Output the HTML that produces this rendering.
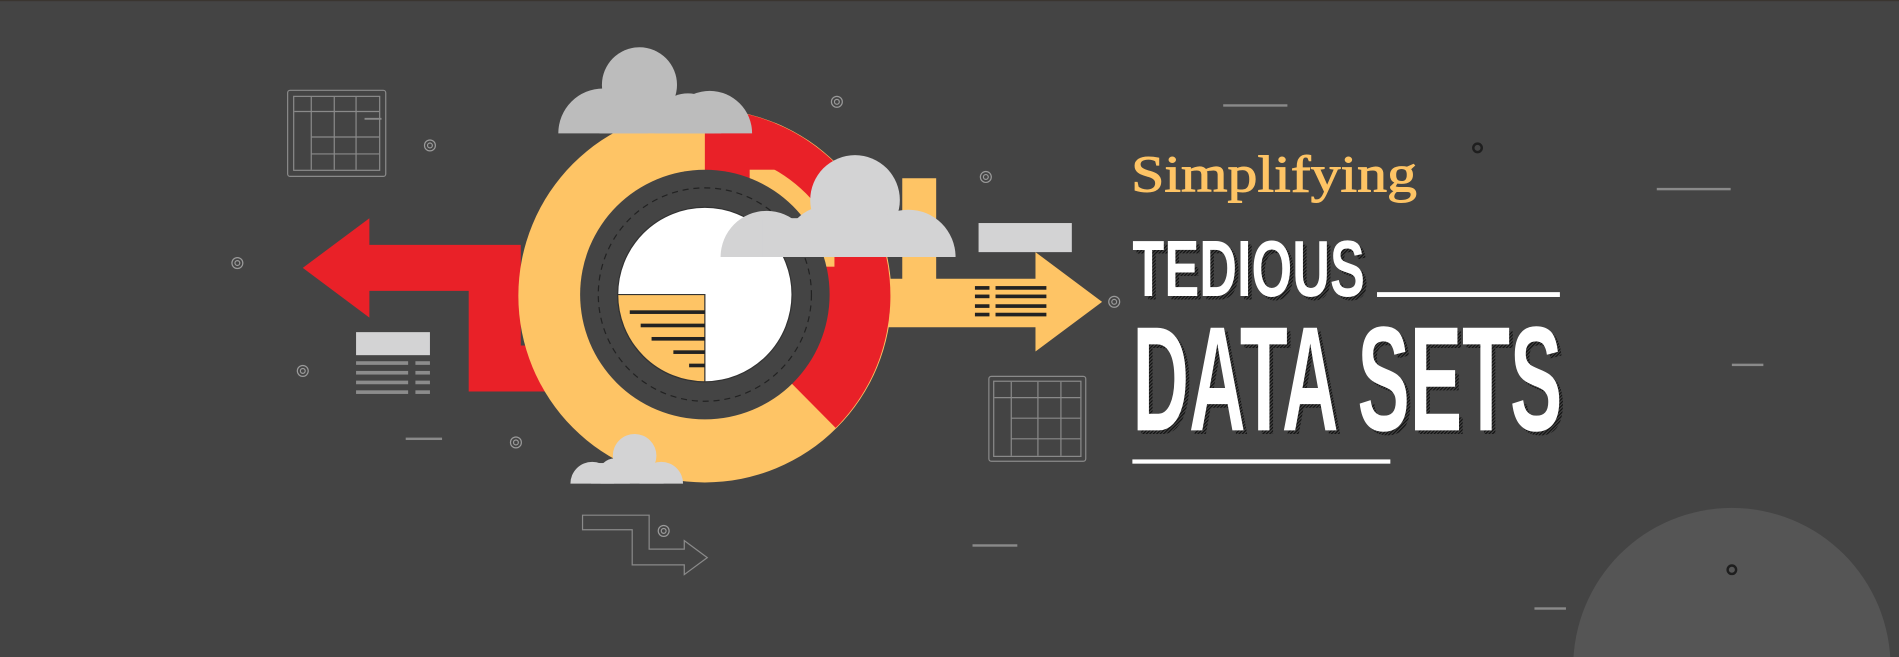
<!DOCTYPE html>
<html><head><meta charset="utf-8"><style>
html,body{margin:0;padding:0;background:#444;width:1899px;height:657px;overflow:hidden}
svg{display:block;position:absolute;left:0;top:0}
</style></head><body>
<svg width="1899" height="657" viewBox="0 0 1568 542" preserveAspectRatio="none" xmlns="http://www.w3.org/2000/svg">
<defs>
<clipPath id="c1"><rect x="0" y="0" width="1568" height="110"/></clipPath>
<clipPath id="c2"><rect x="0" y="0" width="1568" height="212"/></clipPath>
<clipPath id="c3"><rect x="0" y="0" width="1568" height="399"/></clipPath>
<clipPath id="cw"><circle cx="582" cy="243" r="118"/></clipPath>
<pattern id="hatch" width="2" height="2" patternUnits="userSpaceOnUse" patternTransform="rotate(45)"><rect width="1" height="2" fill="#111"/></pattern>
</defs>
<rect width="1568" height="542" fill="#444"/>
<rect width="1568" height="1" fill="#3a3530"/>
<circle cx="1430" cy="550" r="131" fill="#555"/>
<g fill="#8a8a8a">
<rect x="1010" y="86" width="53" height="2"/><rect x="1368" y="155" width="61" height="2"/>
<rect x="1430" y="300" width="26" height="2"/><rect x="335" y="361" width="30" height="2"/>
<rect x="803" y="449" width="37" height="2"/><rect x="1267" y="501" width="26" height="2"/>
</g>
<g fill="none" stroke="#9a9a9a" stroke-width="1">
<circle cx="355" cy="120" r="4.5"/><circle cx="355" cy="120" r="2"/>
<circle cx="196" cy="217" r="4.5"/><circle cx="196" cy="217" r="2"/>
<circle cx="691" cy="84" r="4.5"/><circle cx="691" cy="84" r="2"/>
<circle cx="814" cy="146" r="4.5"/><circle cx="814" cy="146" r="2"/>
<circle cx="920" cy="249" r="4.5"/><circle cx="920" cy="249" r="2"/>
<circle cx="250" cy="306" r="4.5"/><circle cx="250" cy="306" r="2"/>
<circle cx="426" cy="365" r="4.5"/><circle cx="426" cy="365" r="2"/>
<circle cx="548" cy="438" r="4.5"/><circle cx="548" cy="438" r="2"/>
</g>
<g fill="none" stroke="#1e1e1e" stroke-width="2">
<circle cx="1220" cy="122" r="3.5"/><circle cx="1430" cy="470" r="3.5"/>
</g>
<g fill="none" stroke="#8a8a8a" stroke-width="1">
<rect x="237.5" y="74.5" width="81" height="71" rx="2"/>
<rect x="242.5" y="79.5" width="71" height="61"/>
<path d="M257 80V140M276 80V140M294 80V140M243 92H313M257 113H313M257 127H313"/>
<path d="M301 98H315" stroke-width="1.5"/>
<rect x="816.5" y="310.5" width="80" height="70" rx="2"/>
<rect x="820.5" y="314.5" width="72" height="62"/>
<path d="M835 315V376M857 315V376M876 315V376M821 328H892M835 345H892M835 362H892"/>
<path d="M481 425V437H522V466H565V474L584 460L565 446V453H536V425Z"/>
</g>
<polygon points="250,221 305,180 305,202 430,202 430,285 455,285 455,323 387,323 387,240 305,240 305,262" fill="#e92128"/>
<rect x="294" y="274" width="61" height="19" fill="#d3d3d4"/>
<g fill="#8c8c8c">
<rect x="294" y="298" width="43" height="3"/><rect x="343" y="298" width="12" height="3"/>
<rect x="294" y="306" width="43" height="3"/><rect x="343" y="306" width="12" height="3"/>
<rect x="294" y="314" width="43" height="3"/><rect x="343" y="314" width="12" height="3"/>
<rect x="294" y="322" width="43" height="3"/><rect x="343" y="322" width="12" height="3"/>
</g>
<polygon points="745,147 773,147 773,230 855,230 855,208 910,249 855,290 855,270 730,270 730,230 745,230" fill="#fec465"/>
<g fill="#222">
<rect x="805" y="236" width="12" height="3"/><rect x="822" y="236" width="42" height="3"/>
<rect x="805" y="243" width="12" height="3"/><rect x="822" y="243" width="42" height="3"/>
<rect x="805" y="251" width="12" height="3"/><rect x="822" y="251" width="42" height="3"/>
<rect x="805" y="258" width="12" height="3"/><rect x="822" y="258" width="42" height="3"/>
</g>
<circle cx="582" cy="244" r="154" fill="#fec465"/>
<path d="M582 244L582 90A154 154 0 0 1 690 353Z" fill="#e92128"/>
<rect x="619" y="140" width="70" height="80" fill="#fec465" clip-path="url(#cw)"/>
<circle cx="582" cy="243" r="103" fill="#444"/>
<circle cx="582" cy="243" r="88" fill="none" stroke="#222" stroke-width="1" stroke-dasharray="5 4"/>
<circle cx="582" cy="243" r="72" fill="#fff" stroke="#333" stroke-width="1"/>
<path d="M582 243H510A72 72 0 0 0 582 315Z" fill="#fec465" stroke="#333" stroke-width="1"/>
<g fill="#222">
<rect x="520" y="256" width="62" height="3"/><rect x="529" y="267" width="53" height="3"/>
<rect x="538" y="278" width="44" height="3"/><rect x="556" y="289" width="26" height="3"/>
<rect x="569" y="300" width="13" height="3"/>
</g>
<g fill="#bcbcbc" clip-path="url(#c1)">
<circle cx="528" cy="70" r="31"/><circle cx="498" cy="110" r="37"/><circle cx="568" cy="105" r="28"/><circle cx="586" cy="110" r="35"/>
<rect x="495" y="80" width="95" height="31"/>
</g>
<g fill="#d3d3d4" clip-path="url(#c2)">
<circle cx="706" cy="165" r="37"/><circle cx="633" cy="212" r="38"/><circle cx="683" cy="205" r="35"/><circle cx="750" cy="212" r="39"/>
<rect x="630" y="180" width="125" height="33"/>
</g>
<rect x="808" y="184" width="77" height="24" fill="#d3d3d4"/>
<g fill="#d3d3d4" clip-path="url(#c3)">
<circle cx="524" cy="376" r="18"/><circle cx="489" cy="399" r="18"/><circle cx="508" cy="392" r="14"/><circle cx="546" cy="399" r="18"/>
<rect x="488" y="382" width="60" height="18"/>
</g>
<text x="934" y="158" font-family="'Liberation Serif',serif" font-size="43" fill="#fec465" stroke="#fec465" stroke-width="0.8" textLength="236" lengthAdjust="spacingAndGlyphs">Simplifying</text>
<g font-family="'Liberation Sans Narrow','Liberation Sans',sans-serif" font-weight="bold">
<text x="938" y="247" font-size="66" fill="url(#hatch)" textLength="192" lengthAdjust="spacingAndGlyphs">TEDIOUS</text>
<text x="935" y="244" font-size="66" fill="#fff" textLength="192" lengthAdjust="spacingAndGlyphs">TEDIOUS</text>
<text x="938" y="358" font-size="123" fill="url(#hatch)" textLength="355" lengthAdjust="spacingAndGlyphs">DATA SETS</text>
<text x="935" y="355" font-size="123" fill="#fff" textLength="355" lengthAdjust="spacingAndGlyphs">DATA SETS</text>
</g>
<rect x="1137" y="241" width="151" height="4" fill="#fff"/>
<rect x="935" y="379" width="213" height="3.5" fill="#fff"/>
</svg>
</body></html>
